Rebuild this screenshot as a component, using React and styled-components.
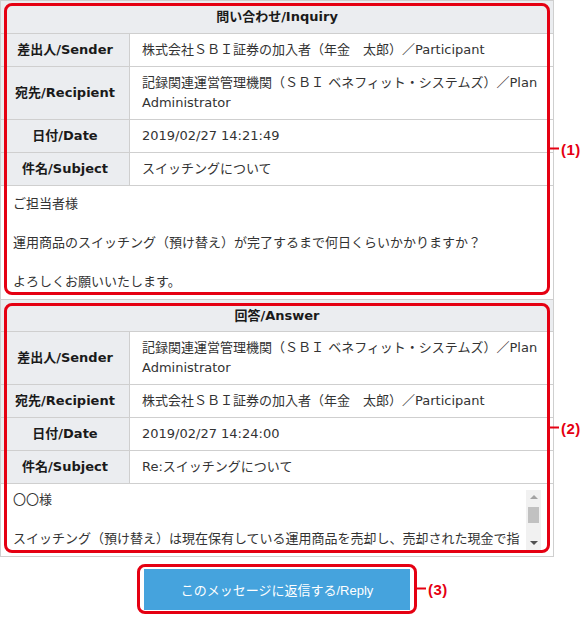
import React from "react";
import styled, { createGlobalStyle } from "styled-components";

const Global = createGlobalStyle`
  html, body { margin: 0; padding: 0; background: #fff; }
  body {
    font-family: "DejaVu Sans", "Noto Sans CJK JP", sans-serif;
    font-size: 13px;
    color: #333;
  }
`;

const RED = "#e50012";

const Page = styled.div`
  width: 554px;
`;

const Panel = styled.div`
  box-sizing: border-box;
  width: 554px;
  border: 1px solid #cfcfcf;
  background: #fff;
`;

const Section = styled.section`
  position: relative;
  & + & { border-top: 1px solid #cfcfcf; }
`;

const Title = styled.div`
  height: ${(p) => (p.$first ? 33 : 32)}px;
  box-sizing: border-box;
  padding: 6px 12px;
  line-height: 20px;
  background: #ebedf0;
  border-bottom: 1px solid #cfcfcf;
  text-align: center;
  font-weight: bold;
  color: #1a1a1a;
`;

const Row = styled.div`
  display: grid;
  grid-template-columns: 129px 1fr;
  border-bottom: 1px solid #cfcfcf;
`;

const Label = styled.div`
  background: #ebedf0;
  border-right: 1px solid #cfcfcf;
  font-weight: bold;
  color: #1a1a1a;
  display: flex;
  align-items: center;
  justify-content: center;
  padding: 6px 4px;
  line-height: 20px;
`;

const Value = styled.div`
  padding: 6px 12px;
  line-height: 20px;
  color: #333;
`;

const Body = styled.div`
  padding: ${(p) => (p.$scroll ? "6px 12px 5px 12px" : "8px 12px 7px 12px")};
  line-height: 19.5px;
  color: #333;
`;

const ScrollBox = styled.div`
  display: flex;
  height: 61px;
`;

const ScrollContent = styled.div`
  flex: 1;
  min-width: 0;
  overflow: hidden;
  line-height: 19.5px;
`;

const ScrollBar = styled.div`
  width: 15px;
  flex: none;
  display: flex;
  flex-direction: column;
  background: #f1f1f1;
`;

const ArrowButton = styled.div`
  height: 15px;
  flex: none;
  display: flex;
  align-items: center;
  justify-content: center;
  &::before {
    content: "";
    width: 0;
    height: 0;
    border-left: 4px solid transparent;
    border-right: 4px solid transparent;
    ${(p) =>
      p.$down
        ? "border-top: 4px solid #505050;"
        : "border-bottom: 4px solid #a3a3a3;"}
  }
`;

const Track = styled.div`
  flex: 1;
  padding: 2px 2px 0 2px;
`;

const Thumb = styled.div`
  height: 16px;
  background: #c1c1c1;
`;

const Para = styled.p`
  margin: 0;
  min-height: 19.5px;
`;

const Frame = styled.div`
  position: absolute;
  top: ${(p) => p.$top}px;
  bottom: ${(p) => p.$bottom}px;
  left: 3px;
  right: 3px;
  border: 3px solid ${RED};
  border-radius: 8px;
  pointer-events: none;
`;

const Callout = styled.div`
  position: absolute;
  left: calc(100% + 3px);
  top: 50%;
  transform: translateY(-50%);
  display: flex;
  align-items: center;
  white-space: nowrap;
`;

const CalloutLine = styled.span`
  display: block;
  width: 9px;
  height: 2px;
  background: ${RED};
  margin-right: 2px;
`;

const CalloutText = styled.span`
  font-family: "Liberation Sans", Arial, sans-serif;
  font-weight: bold;
  font-size: 15px;
  color: ${RED};
  letter-spacing: 0.5px;
`;

const Actions = styled.div`
  display: flex;
  justify-content: center;
  padding-top: 7px;
`;

const ButtonFrame = styled.div`
  position: relative;
  border: 3px solid ${RED};
  border-radius: 8px;
  padding: 2px 4px 1px 4px;
`;

const ReplyButton = styled.button`
  display: block;
  width: 266px;
  height: 41px;
  border: none;
  padding: 0;
  background: #45a3dd;
  color: #fff;
  font-family: "Liberation Sans", "Noto Sans CJK JP", sans-serif;
  font-size: 13px;
  white-space: nowrap;
  cursor: pointer;
`;

const fields1 = [
  ["差出人/Sender", ["株式会社ＳＢＩ証券の加入者（年金　太郎）／Participant"]],
  ["宛先/Recipient", ["記録関連運営管理機関（ＳＢＩ ベネフィット・システムズ）／Plan", "Administrator"]],
  ["日付/Date", ["2019/02/27 14:21:49"]],
  ["件名/Subject", ["スイッチングについて"]],
];

const fields2 = [
  ["差出人/Sender", ["記録関連運営管理機関（ＳＢＩ ベネフィット・システムズ）／Plan", "Administrator"]],
  ["宛先/Recipient", ["株式会社ＳＢＩ証券の加入者（年金　太郎）／Participant"]],
  ["日付/Date", ["2019/02/27 14:24:00"]],
  ["件名/Subject", ["Re:スイッチングについて"]],
];

function Fields({ items }) {
  return items.map(([label, lines]) => (
    <Row key={label}>
      <Label>{label}</Label>
      <Value>
        {lines.map((l, i) => (
          <React.Fragment key={i}>
            {i > 0 && <br />}
            {l}
          </React.Fragment>
        ))}
      </Value>
    </Row>
  ));
}

function Mark({ top, bottom, label }) {
  return (
    <Frame $top={top} $bottom={bottom}>
      <Callout>
        <CalloutLine />
        <CalloutText>{label}</CalloutText>
      </Callout>
    </Frame>
  );
}

export default function App() {
  return (
    <Page>
      <Global />
      <Panel>
        <Section>
          <Title $first>問い合わせ/Inquiry</Title>
          <Fields items={fields1} />
          <Body>
            <Para>ご担当者様</Para>
            <Para />
            <Para>運用商品のスイッチング（預け替え）が完了するまで何日くらいかかりますか？</Para>
            <Para />
            <Para>よろしくお願いいたします。</Para>
          </Body>
          <Mark top={2} bottom={4} label="(1)" />
        </Section>
        <Section>
          <Title>回答/Answer</Title>
          <Fields items={fields2} />
          <Body $scroll>
            <ScrollBox>
              <ScrollContent>
                <Para>〇〇様</Para>
                <Para />
                <Para>
                  スイッチング（預け替え）は現在保有している運用商品を売却し、売却された現金で指定した運用商品を購入します。
                </Para>
                <Para />
                <Para>よろしくお願いいたします。</Para>
              </ScrollContent>
              <ScrollBar aria-hidden="true">
                <ArrowButton />
                <Track>
                  <Thumb />
                </Track>
                <ArrowButton $down />
              </ScrollBar>
            </ScrollBox>
          </Body>
          <Mark top={3} bottom={3} label="(2)" />
        </Section>
      </Panel>
      <Actions>
        <ButtonFrame>
          <ReplyButton type="button">このメッセージに返信する/Reply</ReplyButton>
          <Callout>
            <CalloutLine />
            <CalloutText>(3)</CalloutText>
          </Callout>
        </ButtonFrame>
      </Actions>
    </Page>
  );
}
